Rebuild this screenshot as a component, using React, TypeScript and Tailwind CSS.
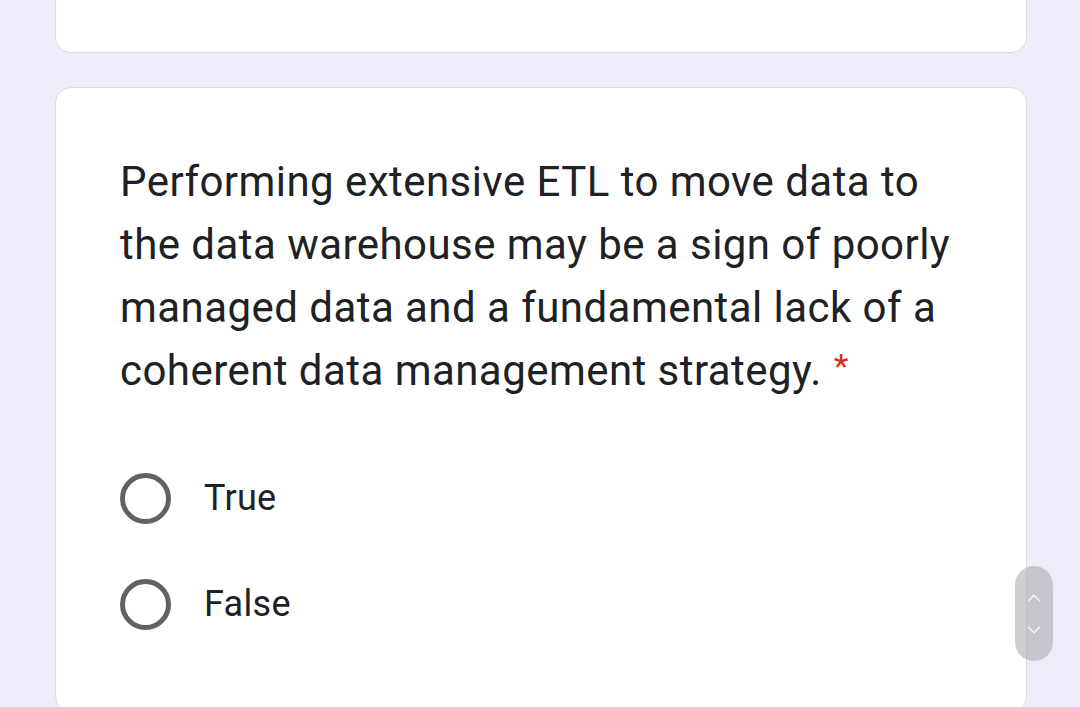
import { ChevronUp, ChevronDown } from 'lucide-react'

const options = ['True', 'False']

export default function App() {
  return (
    <div className="relative h-[707px] w-[1080px] overflow-hidden bg-[#efebf8]">
      <div className="flex flex-col gap-[34px] px-[55px] pr-[53px]">
        {/* previous question card, only its bottom is visible */}
        <div className="-mt-[40px] h-[93px] rounded-[16px] border border-[#dadce0] bg-white" />

        <div className="rounded-[16px] border border-[#dadce0] bg-white px-[64px] pb-[80px] pt-[62px]">
          <div
            className="text-[42px] leading-[63px] tracking-[0.45px] text-[#202124]"
            style={{ fontFamily: 'Roboto, "Open Sans", sans-serif' }}
          >
            Performing extensive ETL to move data to the data warehouse may be a sign of poorly
            managed data and a fundamental lack of a coherent data management strategy.
            <span className="ml-[12px] inline-block align-top pt-[14px] text-[34px] leading-[26px] text-[#d93025]">
              *
            </span>
          </div>

          <div className="mt-[69px] flex flex-col gap-[52px]">
            {options.map((o) => (
              <label key={o} className="flex items-center gap-[33px]">
                <span className="h-[51px] w-[51px] rounded-full border-[5px] border-[#5f6368]" />
                <span
                  className="text-[36px] tracking-[0.3px] text-[#202124]"
                  style={{ fontFamily: 'Roboto, sans-serif' }}
                >
                  {o}
                </span>
              </label>
            ))}
          </div>
        </div>
      </div>

      {/* floating scroll control */}
      <div className="absolute left-[1015px] top-[566px] flex h-[95px] w-[38px] flex-col items-center justify-center gap-[10px] rounded-full bg-[#a8a8a8]/55">
        <ChevronUp size={22} strokeWidth={1.5} className="text-white/85" />
        <ChevronDown size={22} strokeWidth={1.5} className="text-white/85" />
      </div>
    </div>
  )
}
